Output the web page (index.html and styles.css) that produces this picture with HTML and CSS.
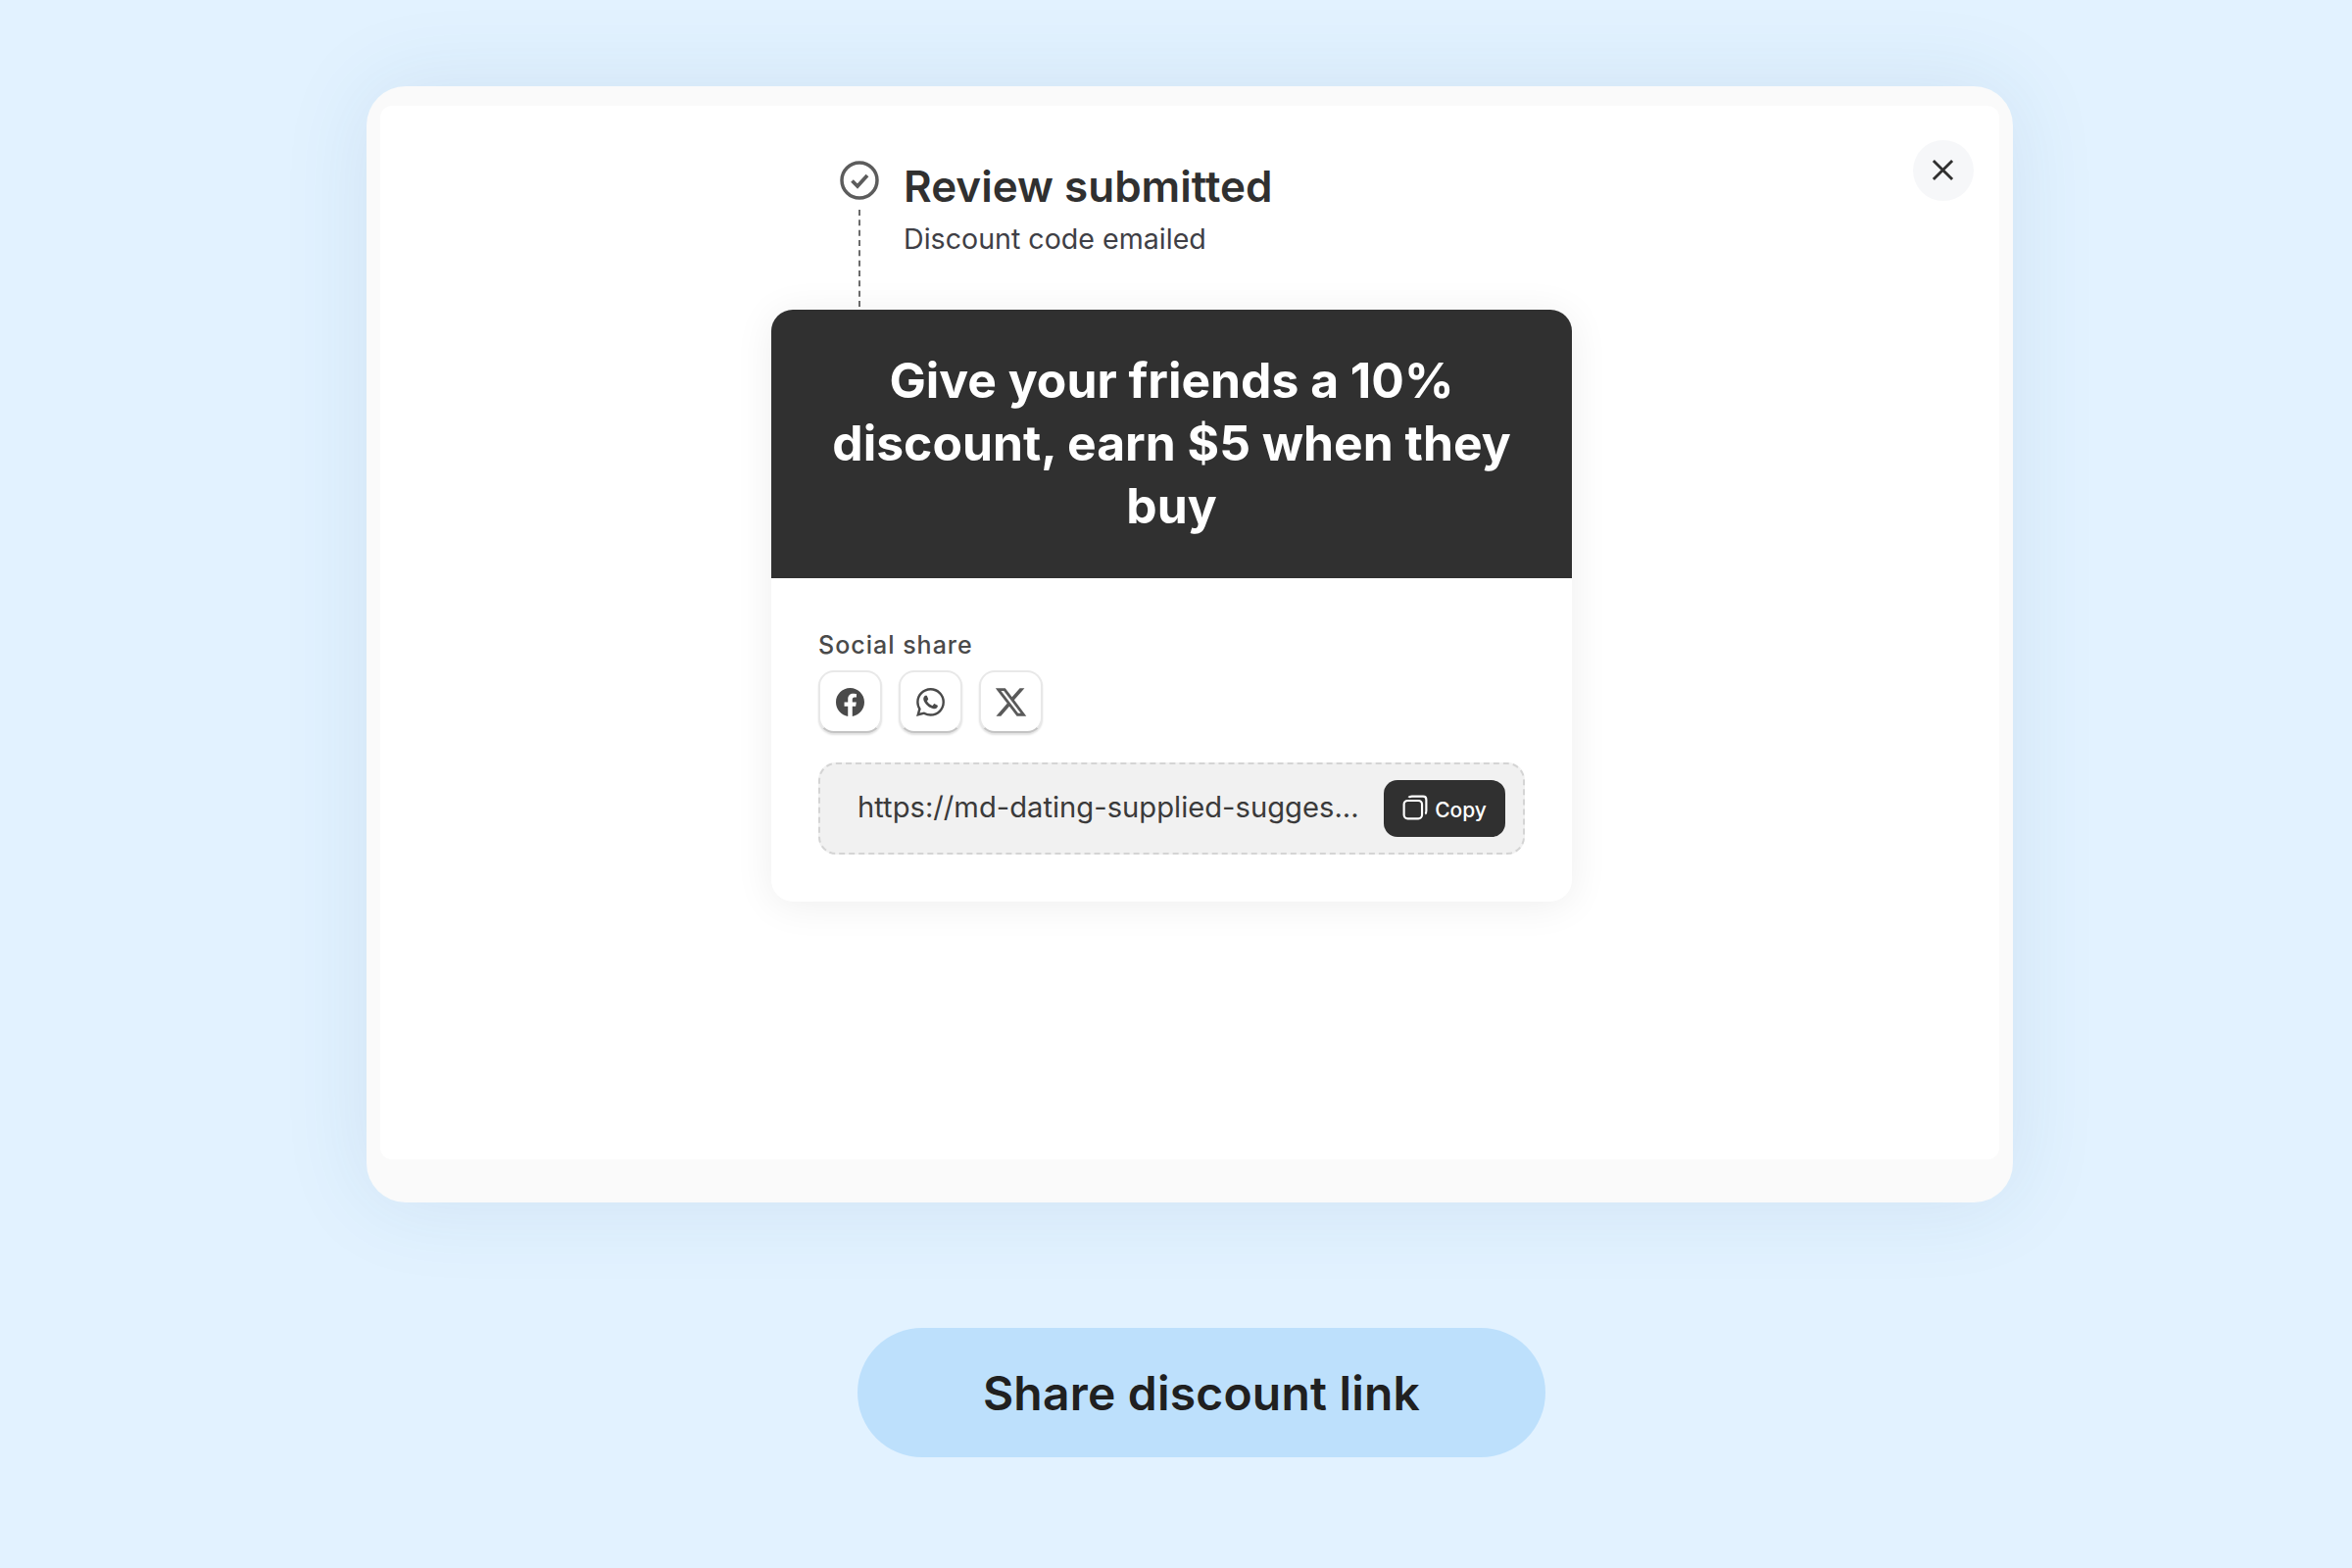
FILE: index.html
```html
<!DOCTYPE html>
<html lang="en">
<head>
<meta charset="utf-8">
<title>Share discount link</title>
<link rel="stylesheet" href="styles.css">
</head>
<body>
<main class="stage">
  <section class="frame">
    <div class="panel">
      <button class="close" aria-label="Close">
        <svg viewBox="0 0 24 24" class="close-icon"><path d="M2 2 22 22M22 2 2 22"/></svg>
      </button>
      <div class="content">
        <div class="status">
          <div class="rail">
            <svg viewBox="0 0 40 40" class="check"><circle cx="20" cy="20" r="18"/><path d="M12.500 20.500 18 26 28 15"/></svg>
            <span class="dash"></span>
          </div>
          <div class="status-text">
            <h2 class="status-title">Review submitted</h2>
            <p class="status-sub">Discount code emailed</p>
          </div>
        </div>
        <article class="offer">
          <header class="offer-head">
            <h1 class="offer-title">Give your friends a 10% discount, earn $5 when they buy</h1>
          </header>
          <div class="offer-body">
            <div class="social-label">Social share</div>
            <div class="social-row">
              <a class="social-btn"><svg viewBox="0 0 24 24" class="social-icon"><path d="M24 12.073c0-6.627-5.373-12-12-12s-12 5.373-12 12c0 5.99 4.388 10.954 10.125 11.854v-8.385H7.078v-3.47h3.047V9.43c0-3.007 1.792-4.669 4.533-4.669 1.312 0 2.686.235 2.686.235v2.953H15.830c-1.491 0-1.956.925-1.956 1.874v2.25h3.328l-.532 3.47h-2.796v8.385C19.612 23.027 24 18.062 24 12.073z"/></svg></a>
              <a class="social-btn"><svg viewBox="0 0 24 24" class="social-icon"><path d="M17.472 14.382c-.297-.149-1.758-.867-2.03-.967-.273-.099-.471-.148-.67.15-.197.297-.767.966-.94 1.164-.173.199-.347.223-.644.075-.297-.15-1.255-.463-2.39-1.475-.883-.788-1.48-1.761-1.653-2.059-.173-.297-.018-.458.13-.606.134-.133.298-.347.446-.52.149-.174.198-.298.298-.497.099-.198.05-.371-.025-.52-.075-.149-.669-1.612-.916-2.207-.242-.579-.487-.5-.669-.51-.173-.008-.371-.01-.57-.01-.198 0-.52.074-.792.372-.272.297-1.04 1.016-1.04 2.479 0 1.462 1.065 2.875 1.213 3.074.149.198 2.096 3.2 5.077 4.487.709.306 1.262.489 1.694.625.712.227 1.36.195 1.871.118.571-.085 1.758-.719 2.006-1.413.248-.694.248-1.289.173-1.413-.074-.124-.272-.198-.57-.347m-5.421 7.403h-.004a9.87 9.87 0 01-5.031-1.378l-.361-.214-3.741.982.998-3.648-.235-.374a9.86 9.86 0 01-1.51-5.26c.001-5.45 4.436-9.884 9.888-9.884 2.64 0 5.122 1.03 6.988 2.898a9.825 9.825 0 012.893 6.994c-.003 5.45-4.437 9.884-9.885 9.884m8.413-18.297A11.815 11.815 0 0012.05 0C5.495 0 .16 5.335.157 11.892c0 2.096.547 4.142 1.588 5.945L.057 24l6.305-1.654a11.882 11.882 0 005.683 1.448h.005c6.554 0 11.89-5.335 11.893-11.893a11.821 11.821 0 00-3.48-8.413Z"/></svg></a>
              <a class="social-btn"><svg viewBox="0 0 24 24" class="social-icon x-icon"><path d="M18.244 2.25h3.308l-7.227 8.26 8.502 11.24H16.17l-5.214-6.817L4.99 21.75H1.68l7.73-8.835L1.254 2.25H8.08l4.713 6.231zm-1.161 17.52h1.833L7.084 4.126H5.117z"/></svg></a>
            </div>
            <div class="link-box">
              <span class="link-url">https://md-dating-supplied-sugges...</span>
              <button class="copy">
                <svg viewBox="0 0 24 24" class="copy-icon"><rect x="1.500" y="5.500" width="17" height="17" rx="3.500"/><path d="M6 2.500Q6.500 1.500 9 1.500H19.500Q22.500 1.500 22.500 4.500V15Q22.500 17.500 21.500 18"/></svg>
                <span class="copy-label">Copy</span>
              </button>
            </div>
          </div>
        </article>
      </div>
    </div>
  </section>
  <a class="cta">Share discount link</a>
</main>
</body>
</html>
```

FILE: styles.css
```css
* { box-sizing: border-box; }
html, body { margin: 0; height: 100%; }
body {
  background: #e2f2ff;
  font-family: Inter, "Liberation Sans", sans-serif;
  color: #303030;
  overflow: hidden;
}
.stage {
  display: flex;
  flex-direction: column;
  align-items: flex-start;
  padding: 88px 0 0 374px;
}
.frame {
  width: 1680px;
  height: 1139px;
  padding: 20px 14px 44px;
  background: #fafafa;
  border-radius: 40px;
  box-shadow: 0 0 90px rgba(40, 90, 140, 0.1);
}
.panel {
  position: relative;
  height: 100%;
  background: #fff;
  border-radius: 12px;
  padding: 57px 0 0 399px;
}
.close {
  position: absolute;
  top: 35px;
  right: 26px;
  width: 62px;
  height: 62px;
  border: 0;
  padding: 0 2px 2px 0;
  border-radius: 50%;
  background: #f6f7f9;
  display: flex;
  align-items: center;
  justify-content: center;
}
.close-icon {
  width: 23px;
  height: 23px;
  fill: none;
  stroke: #303030;
  stroke-width: 3;
}
.content { width: 817px; }
.status {
  display: flex;
  gap: 25px;
  height: 151px;
  padding-left: 70px;
}
.rail {
  width: 40px;
  display: flex;
  flex-direction: column;
  align-items: center;
}
.check {
  width: 40px;
  height: 40px;
  flex: none;
  margin-top: -1px;
  fill: none;
  stroke: #5c5c5c;
  stroke-width: 3.500;
}
.check path { stroke-width: 3.800; }
.dash {
  flex: 1;
  margin-top: 10px;
  margin-bottom: 3px;
  width: 0;
  border-left: 2px dashed #6a6a6a;
}
.status-title {
  margin: -3px 0 0;
  font-size: 44px;
  line-height: 56px;
  font-weight: 600;
  color: #303030;
}
.status-sub {
  margin: 8px 0 0;
  font-size: 28.600px;
  line-height: 36px;
  font-weight: 400;
  color: #3f3f46;
}
.offer {
  background: #fff;
  border-radius: 22px;
  height: 604px;
  box-shadow: 0 4px 40px rgba(0, 0, 0, 0.07);
  overflow: hidden;
}
.offer-head {
  background: #303030;
  height: 274px;
  padding: 40px 48px 0;
}
.offer-title {
  margin: 0;
  color: #fff;
  font-size: 49.800px;
  line-height: 64px;
  font-weight: 700;
  text-align: center;
}
.offer-body { padding: 53px 48px 0; }
.social-label {
  font-size: 25px;
  line-height: 30px;
  font-weight: 500;
  letter-spacing: 1px;
  color: #4a4a4a;
}
.social-row {
  display: flex;
  gap: 17px;
  margin-top: 11px;
}
.social-btn {
  width: 65px;
  height: 64px;
  border-radius: 16px;
  background: #fff;
  border: 2px solid #e8e8e8;
  border-bottom-color: #c4c4c4;
  box-shadow: 0 2px 2px rgba(0, 0, 0, 0.12);
  display: flex;
  align-items: center;
  justify-content: center;
}
.social-icon {
  width: 29px;
  height: 29px;
  fill: #4a4a4a;
}
.x-icon { width: 35px; height: 35px; fill: #5a5a5a; }
.link-box {
  margin-top: 30px;
  width: 721px;
  height: 94px;
  border: 2px dashed #d4d4d4;
  border-radius: 18px;
  background: #f1f1f1;
  display: flex;
  align-items: center;
  justify-content: space-between;
  padding: 0 18px 0 38px;
}
.link-url {
  font-size: 29.200px;
  color: #3a3a3a;
  white-space: nowrap;
  margin-top: -3px;
}
.copy {
  width: 124px;
  height: 58px;
  border: 0;
  border-radius: 14px;
  background: #303030;
  color: #fff;
  font-family: Inter, "Liberation Sans", sans-serif;
  font-size: 21px;
  font-weight: 500;
  display: flex;
  align-items: center;
  justify-content: center;
  gap: 7px;
  padding: 0;
}
.copy-icon {
  width: 26px;
  height: 26px;
  margin-top: -3px;
  fill: none;
  stroke: #fff;
  stroke-width: 2;
}
.copy-label { margin-top: 2px; }
.cta {
  margin: 128px 0 0 501px;
  width: 702px;
  height: 132px;
  border-radius: 66px;
  background: #bde0fc;
  color: #202020;
  font-size: 48px;
  font-weight: 600;
  letter-spacing: 0.2px;
  display: flex;
  align-items: center;
  justify-content: center;
}
```
